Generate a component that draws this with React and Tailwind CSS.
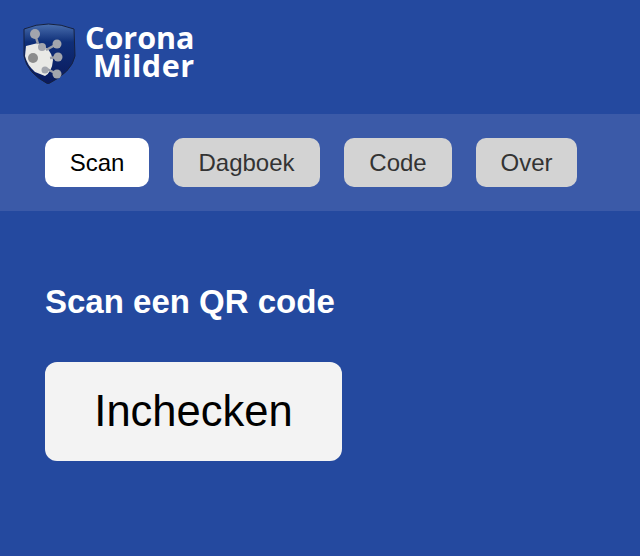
import React from 'react';

const tabs = [
  { label: 'Scan', active: true, width: 'w-[104px]' },
  { label: 'Dagboek', active: false, width: 'w-[147px]' },
  { label: 'Code', active: false, width: 'w-[108px]' },
  { label: 'Over', active: false, width: 'w-[101px]' },
];

const spikes = [
  { x: 35, y: 34, r: 5, fx: 38, fy: 44 },
  { x: 42, y: 47, r: 4, fx: 42, fy: 47 },
  { x: 57, y: 44, r: 4.5, fx: 46, fy: 50 },
  { x: 58, y: 57, r: 4.5, fx: 50, fy: 58 },
  { x: 57, y: 74, r: 4.5, fx: 45, fy: 68 },
  { x: 45, y: 70, r: 3.5, fx: 45, fy: 70 },
];

const Logo = () => (
  <svg width="56" height="64" viewBox="22 20 56 64" className="shrink-0">
    <defs>
      <linearGradient id="shield" x1="0" y1="0" x2="0" y2="1">
        <stop offset="0" stopColor="#4a6fae" />
        <stop offset="0.3" stopColor="#0f2f78" />
        <stop offset="1" stopColor="#0a1a5c" />
      </linearGradient>
    </defs>
    <path
      d="M24 29 Q48 19 74 29 L75 56 Q72 72 48 84 Q27 73 24 56 Z"
      fill="url(#shield)"
      stroke="#16213f"
      strokeWidth="1"
    />
    <path d="M26 46 L38 43 Q51 48 53 60 Q52 72 45 76 L35 72 Q27 65 25 56 Z" fill="#e9e9e6" />
    {spikes.map((s) => (
      <g key={s.x + '-' + s.y}>
        <line x1={s.x} y1={s.y} x2={s.fx} y2={s.fy} stroke="#9a9da6" strokeWidth="2.5" />
        <circle cx={s.x} cy={s.y} r={s.r} fill="#a2a5ad" />
      </g>
    ))}
    <circle cx="33" cy="58" r="5" fill="#8c8c8c" />
  </svg>
);

export default function App() {
  return (
    <div className="w-[640px] h-[556px] overflow-hidden bg-[#24499f] font-['Liberation_Sans',Arial,sans-serif]">
      <header className="h-[114px] pl-[22px] pb-[10px] flex items-center gap-[7px]">
        <Logo />
        <div className="flex flex-col items-end font-['Open_Sans',sans-serif] font-bold text-white text-[30.5px] leading-[28px] pb-[2px]">
          <span>Corona</span>
          <span className="tracking-[0.5px]">Milder</span>
        </div>
      </header>

      <nav className="h-[97px] bg-[#3b5aa8] pl-[45px] flex items-center gap-[24px]">
        {tabs.map((tab) => (
          <button
            key={tab.label}
            className={
              tab.active
                ? 'h-[49px] w-[104px] rounded-[10px] bg-white text-black text-[24px]'
                : `h-[49px] ${tab.width} rounded-[10px] bg-[#d3d3d3] text-[#333333] text-[24px]`
            }
          >
            {tab.label}
          </button>
        ))}
      </nav>

      <main className="pl-[45px] pt-[73px]">
        <h1 className="text-white font-bold text-[33px] leading-[36px]">Scan een QR code</h1>
        <button className="mt-[42px] w-[297px] h-[99px] rounded-[12px] bg-[#f3f3f3] text-black text-[43.5px]">
          Inchecken
        </button>
      </main>
    </div>
  );
}
